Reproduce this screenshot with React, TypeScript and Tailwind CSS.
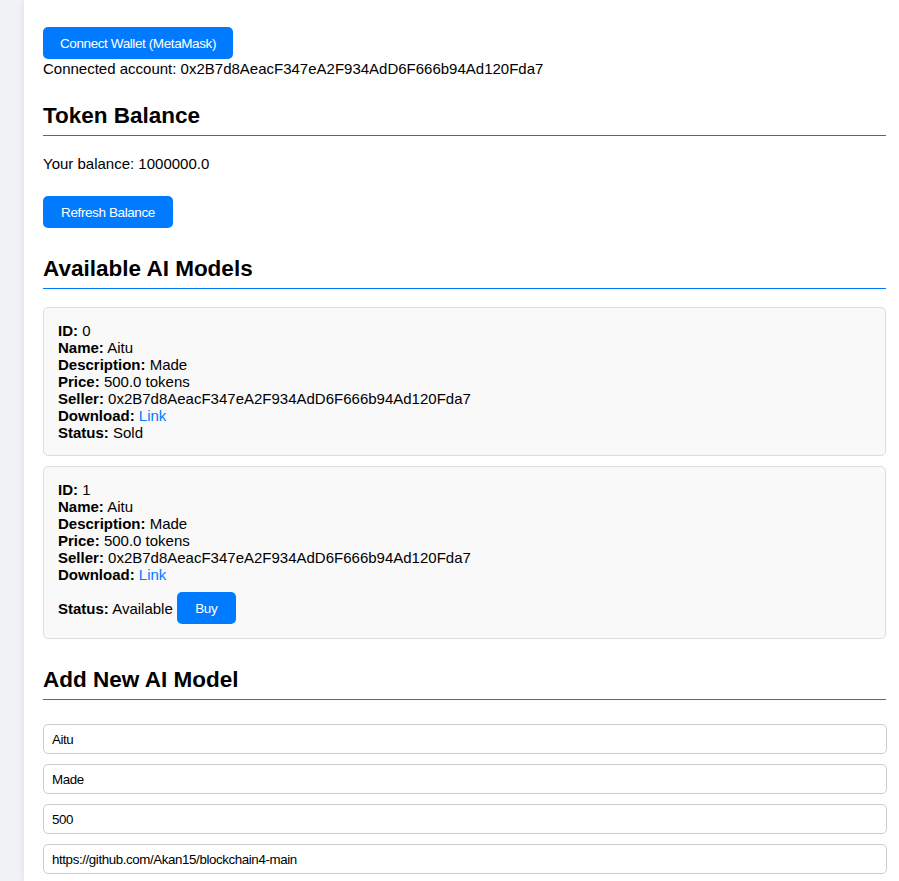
import React from "react";

const address = "0x2B7d8AeacF347eA2F934AdD6F666b94Ad120Fda7";

function Field({ label, children }: { label: string; children: React.ReactNode }) {
  return (
    <div className="h-[17px] whitespace-nowrap">
      <span className="font-bold">{label}:</span> {children}
    </div>
  );
}

function Card({ id, sold, className }: { id: number; sold: boolean; className?: string }) {
  return (
    <div className={"rounded-[5px] border border-[#dddddd] bg-[#f9f9f9] p-[14px] " + (className ?? "")}>
      <Field label="ID">{id}</Field>
      <Field label="Name">Aitu</Field>
      <Field label="Description">Made</Field>
      <Field label="Price">500.0 tokens</Field>
      <Field label="Seller">{address}</Field>
      <Field label="Download">
        <a className="text-[#007bff]" href="#">
          Link
        </a>
      </Field>
      {sold ? (
        <Field label="Status">Sold</Field>
      ) : (
        <div className="mt-[9px] flex h-8 items-center">
          <span>
            <span className="font-bold">Status:</span> Available
          </span>
          <button className="ml-1 h-8 w-[59px] rounded-[5px] bg-[#007bff] text-center text-[13.5px] tracking-[-0.4px] text-white">
            Buy
          </button>
        </div>
      )}
    </div>
  );
}

function Heading({ children, className }: { children: React.ReactNode; className?: string }) {
  return (
    <h2
      className={
        "border-b border-[#007bff] pb-[6px] text-[22.5px] font-bold leading-[26px] text-black " + (className ?? "")
      }
    >
      {children}
    </h2>
  );
}

export default function App() {
  const inputs = ["Aitu", "Made", "500", "https://github.com/Akan15/blockchain4-main"];
  return (
    <div
      className="h-screen overflow-hidden bg-[#f1f2f6] pl-6 text-[15px] leading-[17px] text-black"
      style={{ fontFamily: '"Liberation Sans", Arial, sans-serif' }}
    >
      <div className="min-h-full bg-white pl-[19px] pr-[13px] pt-[27px] shadow-[0_0_8px_rgba(0,0,0,0.08)]">
        <button className="h-8 w-[190px] rounded-[5px] bg-[#007bff] text-center text-[13.5px] tracking-[-0.4px] text-white">
          Connect Wallet (MetaMask)
        </button>
        <div className="mt-px">Connected account: {address}</div>

        <Heading className="mt-[26px]">Token Balance</Heading>
        <div className="mt-[19px]">Your balance: 1000000.0</div>
        <button className="mt-6 h-8 w-[130px] rounded-[5px] bg-[#007bff] text-center text-[13.5px] tracking-[-0.4px] text-white">
          Refresh Balance
        </button>

        <Heading className="mt-[28px]">Available AI Models</Heading>
        <Card id={0} sold className="mt-[18px]" />
        <Card id={1} sold={false} className="mt-[10px]" />

        <Heading className="mt-[28px]">Add New AI Model</Heading>
        <div className="mt-6 flex flex-col gap-[10px]">
          {inputs.map((v) => (
            <input
              key={v}
              defaultValue={v}
              className="h-[30px] w-[844px] rounded-[5px] border border-[#cccccc] bg-white px-2 text-[13.33px] tracking-[-0.4px] text-black outline-none"
              style={{ fontFamily: '"Liberation Sans", Arial, sans-serif' }}
            />
          ))}
        </div>
      </div>
    </div>
  );
}
